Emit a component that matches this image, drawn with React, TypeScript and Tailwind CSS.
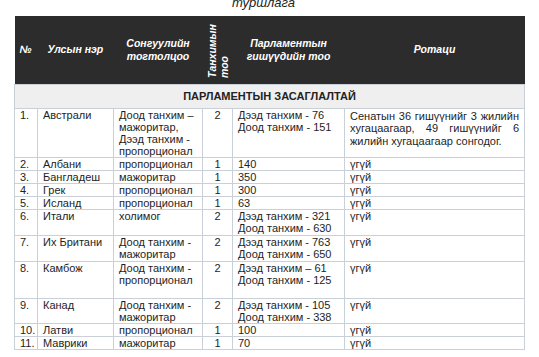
import React from "react";

type Row = {
  n: string;
  name: string;
  sys: string[];
  ch: string;
  parl: string[];
  rot: string;
  h: string;
};

const rows: Row[] = [
  { n: "1.", name: "Австрали", sys: ["Доод танхим –", "мажоритар,", "Дээд танхим -", "пропорционал"], ch: "2", parl: ["Дээд танхим - 76", "Доод танхим - 151"], rot: "long", h: "h-[48px]" },
  { n: "2.", name: "Албани", sys: ["пропорционал"], ch: "1", parl: ["140"], rot: "үгүй", h: "h-[12px]" },
  { n: "3.", name: "Бангладеш", sys: ["мажоритар"], ch: "1", parl: ["350"], rot: "үгүй", h: "h-[12px]" },
  { n: "4.", name: "Грек", sys: ["пропорционал"], ch: "1", parl: ["300"], rot: "үгүй", h: "h-[12px]" },
  { n: "5.", name: "Исланд", sys: ["пропорционал"], ch: "1", parl: ["63"], rot: "үгүй", h: "h-[12px]" },
  { n: "6.", name: "Итали", sys: ["холимог"], ch: "2", parl: ["Дээд танхим - 321", "Доод танхим - 630"], rot: "үгүй", h: "h-[26px]" },
  { n: "7.", name: "Их Британи", sys: ["Доод танхим -", "мажоритар"], ch: "2", parl: ["Дээд танхим - 763", "Доод танхим - 650"], rot: "үгүй", h: "h-[26px]" },
  { n: "8.", name: "Камбож", sys: ["Доод танхим -", "пропорционал"], ch: "2", parl: ["Дээд танхим – 61", "Доод танхим - 125"], rot: "үгүй", h: "h-[37px]" },
  { n: "9.", name: "Канад", sys: ["Доод танхим -", "мажоритар"], ch: "2", parl: ["Дээд танхим - 105", "Доод танхим - 338"], rot: "үгүй", h: "h-[25px]" },
  { n: "10.", name: "Латви", sys: ["пропорционал"], ch: "1", parl: ["100"], rot: "үгүй", h: "h-[13px]" },
  { n: "11.", name: "Маврики", sys: ["мажоритар"], ch: "1", parl: ["70"], rot: "үгүй", h: "h-[13px]" },
];

const td = "border border-[#c9d0d8] align-top px-[5px] py-0 leading-[12px]";

export default function App() {
  return (
    <div className="w-[539px] h-[357px] bg-white overflow-hidden text-[#1e1e1e]" style={{ fontFamily: '"Liberation Sans", Arial, sans-serif' }}>
      <div className="h-[16px] overflow-hidden flex justify-center">
        <div className="-mt-[5px] pr-[12px] italic text-[13px] leading-[16px] text-[#222]">туршлага</div>
      </div>
      <div className="pl-[14px]">
        <table className="table-fixed border-collapse w-[510px] text-[11px]">
          <colgroup>
            <col className="w-[23px]" />
            <col className="w-[76px]" />
            <col className="w-[89px]" />
            <col className="w-[30px]" />
            <col className="w-[112px]" />
            <col className="w-[180px]" />
          </colgroup>
          <thead>
            <tr className="bg-[#2c2c2c] text-white h-[68px] text-[10.5px] font-bold italic leading-[13px]">
              <th className="text-left pl-[5px] font-bold">№</th>
              <th className="text-left pl-[10px] font-bold">Улсын нэр</th>
              <th className="text-center font-bold">Сонгуулийн<br />тогтолцоо</th>
              <th className="p-0 font-bold">
                <div className="flex justify-center">
                  <div className="[writing-mode:vertical-rl] rotate-180 text-left leading-[12px] h-[56px]">Танхимын<br />тоо</div>
                </div>
              </th>
              <th className="text-center font-bold">Парламентын<br />гишүүдийн тоо</th>
              <th className="text-center font-bold">Ротаци</th>
            </tr>
          </thead>
          <tbody>
            <tr className="bg-[#efefef] h-[24px]">
              <td colSpan={6} className="border border-[#c9d0d8] text-center font-bold text-[11px] text-[#222] pt-[1px]">ПАРЛАМЕНТЫН ЗАСАГЛАЛТАЙ</td>
            </tr>
            {rows.map((r) => (
              <tr key={r.n} className={r.h}>
                <td className={td + " px-[4px]"}>{r.n}</td>
                <td className={td}>{r.name}</td>
                <td className={td}>
                  {r.sys.map((s, i) => (
                    <div key={i}>{s}</div>
                  ))}
                </td>
                <td className={td + " text-center"}>{r.ch}</td>
                <td className={td}>
                  {r.parl.map((s, i) => (
                    <div key={i}>{s}</div>
                  ))}
                </td>
                <td className={td}>
                  {r.rot === "long" ? (
                    <div className="text-justify [text-align-last:left] leading-[12.5px] pt-[1px]">
                      Сенатын 36 гишүүнийг 3 жилийн хугацаагаар, 49 гишүүнийг 6 жилийн хугацаагаар сонгодог.
                    </div>
                  ) : (
                    r.rot
                  )}
                </td>
              </tr>
            ))}
          </tbody>
        </table>
      </div>
    </div>
  );
}
